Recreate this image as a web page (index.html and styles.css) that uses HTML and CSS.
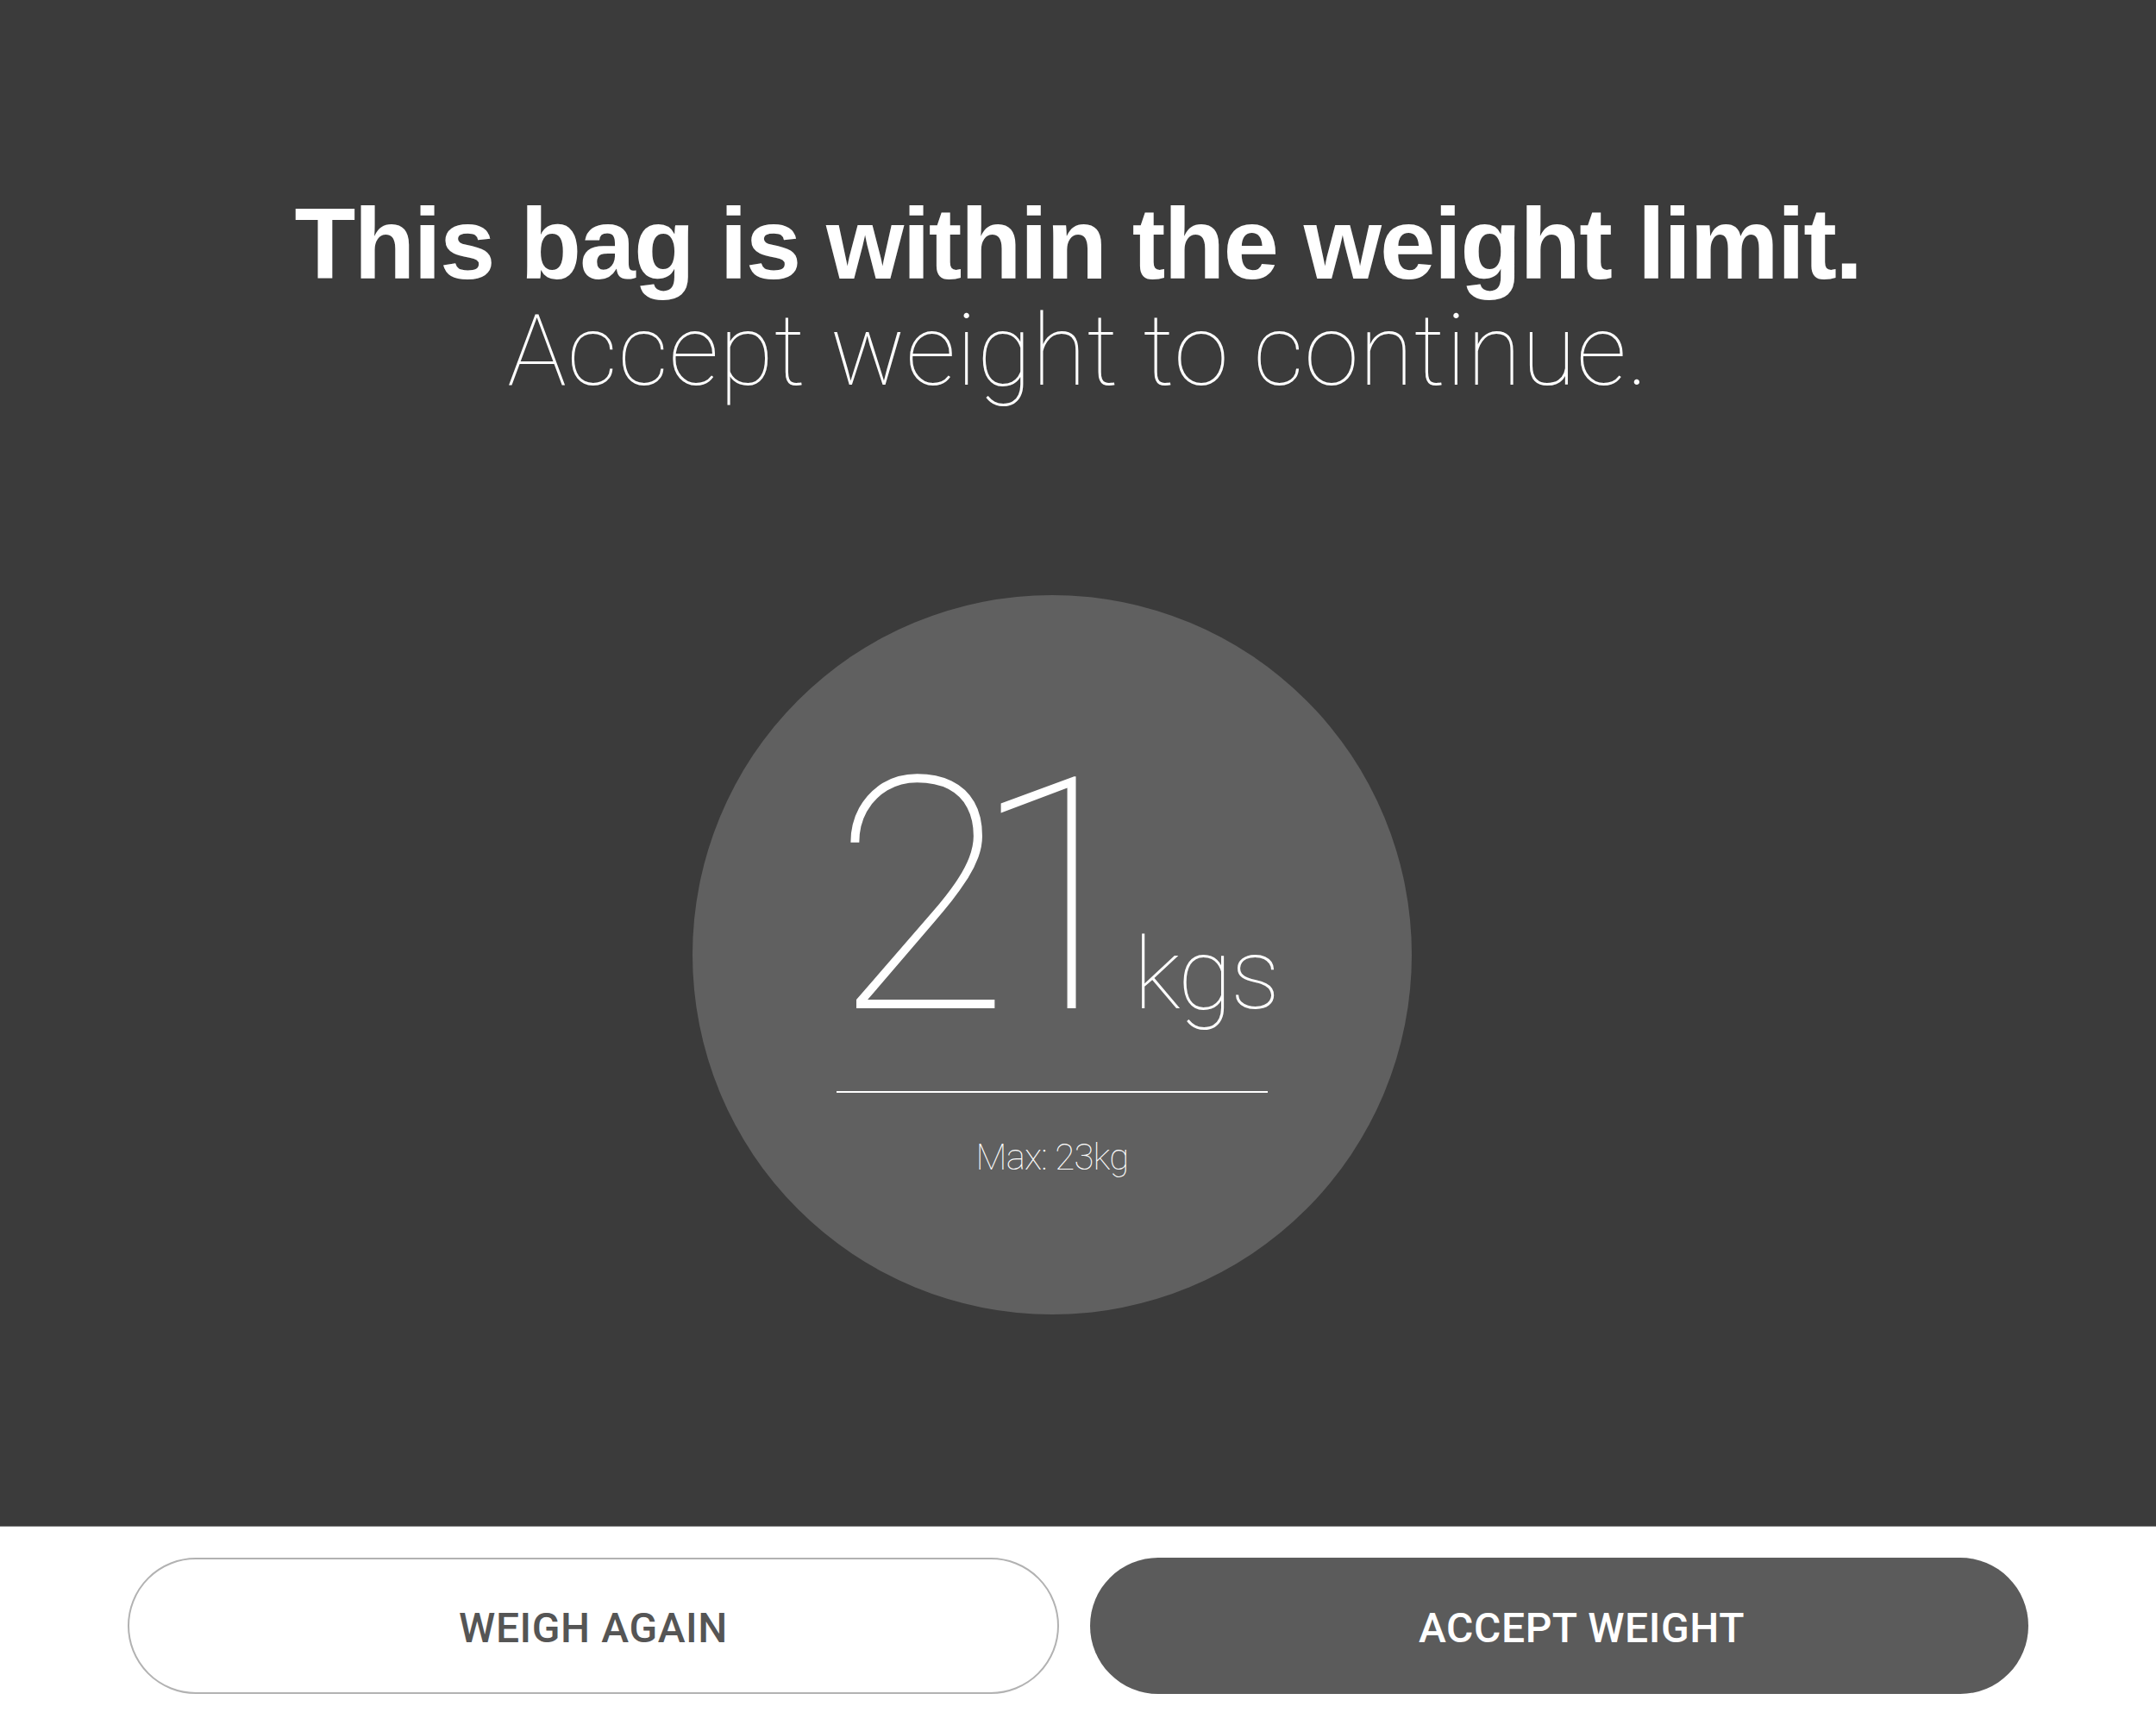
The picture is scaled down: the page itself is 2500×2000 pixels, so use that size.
FILE: index.html
```
<!DOCTYPE html>
<html lang="en">
<head>
<meta charset="utf-8">
<title>Bag weight</title>
<link rel="stylesheet" href="styles.css">
</head>
<body>
<main class="screen">
  <header class="message">
    <h1 class="title">This bag is within the weight limit.</h1>
    <p class="subtitle">Accept weight to continue.</p>
  </header>
  <section class="dial">
    <div class="reading"><span class="value">21</span><span class="unit">kgs</span></div>
    <hr class="rule">
    <p class="max">Max: 23kg</p>
  </section>
</main>
<footer class="actions">
  <button class="btn btn-outline">WEIGH AGAIN</button>
  <button class="btn btn-solid">ACCEPT WEIGHT</button>
</footer>
</body>
</html>
```
FILE: styles.css
```
html, body {
  margin: 0;
  padding: 0;
  background: #ffffff;
}
body {
  width: 2500px;
  height: 2000px;
  overflow: hidden;
}
.screen {
  height: 1770px;
  background: #3b3b3b;
  border-bottom: 1px solid #6a6a6a;
  box-sizing: border-box;
  display: flex;
  flex-direction: column;
  align-items: center;
  color: #ffffff;
}
.message {
  padding-top: 221px;
  text-align: center;
}
.title {
  margin: 0;
  font-family: "Liberation Sans", Arial, sans-serif;
  font-weight: 700;
  font-size: 116px;
  line-height: 124px;
  letter-spacing: -1.8px;
}
.subtitle {
  margin: 0;
  font-family: Roboto, "Liberation Sans", sans-serif;
  font-weight: 100;
  font-size: 115px;
  line-height: 124px;
  letter-spacing: 0.6px;
}
.dial {
  margin: 221px 60px 0 0;
  width: 834px;
  height: 834px;
  border-radius: 50%;
  background: #606060;
  display: flex;
  flex-direction: column;
  align-items: center;
  box-sizing: border-box;
  padding-top: 162px;
}
.reading {
  font-family: Roboto, "Liberation Sans", sans-serif;
  font-weight: 100;
  line-height: 377px;
  height: 377px;
  white-space: nowrap;
  margin-left: 7px;
}
.value {
  font-size: 377px;
  letter-spacing: -45px;
}
.unit {
  font-size: 115px;
  line-height: 1;
  margin-left: 27px;
  letter-spacing: -2px;
}
.rule {
  margin: 36px 0 0;
  width: 500px;
  height: 2px;
  border: 0;
  background: #ffffff;
}
.max {
  margin: 50px 0 0;
  font-family: Roboto, "Liberation Sans", sans-serif;
  font-weight: 100;
  font-size: 42px;
  line-height: 50px;
  letter-spacing: -0.8px;
}
.actions {
  display: grid;
  grid-template-columns: 1080px 1088px;
  column-gap: 36px;
  padding: 36px 148px 0;
}
.btn {
  height: 158px;
  border-radius: 79px;
  font-family: Roboto, "Liberation Sans", sans-serif;
  font-weight: 500;
  font-size: 48px;
  line-height: 1;
  letter-spacing: 0.6px;
  display: flex;
  align-items: center;
  justify-content: center;
  padding: 5px 0 0;
  cursor: pointer;
}
.btn-outline {
  background: #ffffff;
  border: 2px solid #b2b2b2;
  color: #555555;
}
.btn-solid {
  background: #5b5b5b;
  border: 0;
  color: #ffffff;
  padding-left: 52px;
}
```
